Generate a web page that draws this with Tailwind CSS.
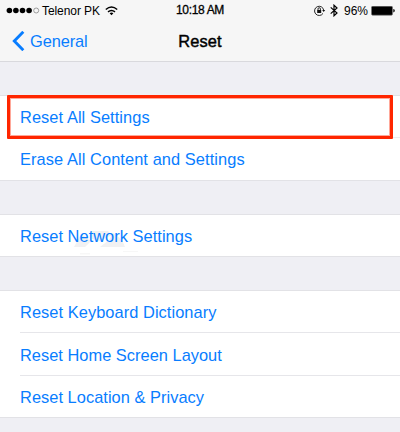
<!DOCTYPE html>
<html lang="en">
<head>
<meta charset="utf-8">
<title>Reset</title>
<script src="https://cdn.jsdelivr.net/npm/@tailwindcss/browser@4"></script>
</head>
<body class="w-[400px] h-[432px] overflow-hidden bg-[#efeff4] font-['Liberation_Sans',Arial,sans-serif] text-[#087dff]">
<header class="h-[62px] bg-[#f6f6f6] border-b border-[#d9d9dd] text-black">
  <div class="grid grid-cols-3 h-[21px] text-[12px] leading-5">
    <div class="flex items-center pl-[6px]">
      <svg class="w-[34px] h-[8px] shrink-0" viewBox="0 0 34 8"><g><circle cx="3.4" cy="3.5" r="2.8"/><circle cx="9.9" cy="3.5" r="2.8"/><circle cx="16.5" cy="3.5" r="2.8"/><circle cx="23.1" cy="3.5" r="2.8"/><circle cx="30.2" cy="3.5" r="2.5" fill="none" stroke="#777" stroke-width=".7"/></g></svg>
      <span class="ml-[2px] whitespace-nowrap tracking-[-0.08px]">Telenor PK</span>
      <svg class="ml-[5px] w-[13px] h-[10px] shrink-0" viewBox="0 0 13 10" fill="none" stroke="#000" stroke-width="1.5"><path d="M.8 3.5Q6.5-1.5 12.2 3.5M3 5.9Q6.5 3 10 5.9"/><path d="M4.6 7.3Q6.5 5.9 8.4 7.3L6.5 9.3Z" fill="#000" stroke="none"/></svg>
    </div>
    <div class="text-center leading-[21px] tracking-[-0.35px] [-webkit-text-stroke:0.3px_#000]">10:18 AM</div>
    <div class="flex items-center justify-end pr-[5px]">
      <svg class="w-[12px] h-[12px]" viewBox="0 0 12 12" fill="none" stroke="#111" stroke-width=".9"><path d="M9 8.4A4.6 4.6 0 1 1 9.7 5.2"/><path d="M8.2 5h3L9.7 7.1Z" fill="#111" stroke="none"/><path d="M3.2 5h4v3h-4z" fill="#111" stroke="none"/><path d="M4 5.3V3.9a1.2 1.2 0 0 1 2.4 0v1.4"/></svg>
      <svg class="ml-[4px] mr-[1px] w-[8px] h-[13px]" viewBox="0 0 8 13" fill="none" stroke="#000" stroke-width="1.2"><path d="M.7 3.4 7 9 4 11.8V1.2L7 4 .7 9.6"/></svg>
      <span class="ml-[5px]">96%</span>
      <svg class="ml-[3px] w-[24px] h-[10px]" viewBox="0 0 24 10"><rect x=".5" y=".2" width="21" height="9" rx="1.2" fill="#000" stroke="#777" stroke-width=".6"/><path d="M22.3 3q1.5.4 1.5 1.7T22.3 6.4Z"/></svg>
    </div>
  </div>
  <div class="grid grid-cols-3 h-[40px] items-center">
    <div class="flex items-center pl-3 text-[#087dff]">
      <svg class="w-[13px] h-[20px]" viewBox="0 0 13 20" fill="none" stroke="#087dff" stroke-width="2.9"><path d="M11.3.8 2.3 10l9 9.2"/></svg>
      <span class="ml-[5px] text-[16.4px] leading-5 tracking-[-0.1px]">General</span>
    </div>
    <h1 class="text-center text-[16.4px] leading-5 tracking-[0.1px] [-webkit-text-stroke:0.45px_#000]">Reset</h1>
  </div>
</header>
<main class="pt-[33px] text-[16.4px] leading-5">
  <section class="relative h-[86px] bg-white border-y border-[#e2e2e6]">
    <div class="h-[41px] pl-5 pt-[11px]"><span class="tracking-[0.07px]">Reset All Settings</span></div>
    <div class="ml-5 h-[43px] pt-[11px] border-t border-[#ececef]"><span class="tracking-[0.08px]">Erase All Content and Settings</span></div>
    <div class="absolute left-[7px] top-[-1px] w-[386px] h-[44px] border-[3px] border-[#ff2600] rounded-[1px] ring-1 ring-inset ring-[#ff2600]/40"></div>
  </section>
  <section class="relative mt-[33px] h-[43px] bg-white border-y border-[#e2e2e6]">
    <svg class="absolute left-[72px] top-[15px] w-[68px] h-[26px]" viewBox="0 0 68 26" fill="#f1f1f2"><path d="M2 17 9 4l10 7-6 6ZM19 1h17l4 4-12 6-8-2ZM28 17l9-7 4-7q9 5 12 14Z"/><path d="M8 23h10v1.5H8zM51 21h15v1H51z" opacity=".6"/></svg>
    <div class="relative pl-5 pt-[11px]"><span class="tracking-[0.04px]">Reset Network Settings</span></div>
  </section>
  <section class="mt-[33px] h-[128px] bg-white border-y border-[#e2e2e6]">
    <div class="h-[41px] pl-5 pt-[11px]"><span class="tracking-[0.06px]">Reset Keyboard Dictionary</span></div>
    <div class="ml-5 h-[43px] pt-[12px] border-t border-[#e6e6ea]"><span class="tracking-[0.02px]">Reset Home Screen Layout</span></div>
    <div class="ml-5 h-[42px] pt-[11px] border-t border-[#e6e6ea]"><span class="tracking-[0.04px]">Reset Location &amp; Privacy</span></div>
  </section>
</main>
</body>
</html>
